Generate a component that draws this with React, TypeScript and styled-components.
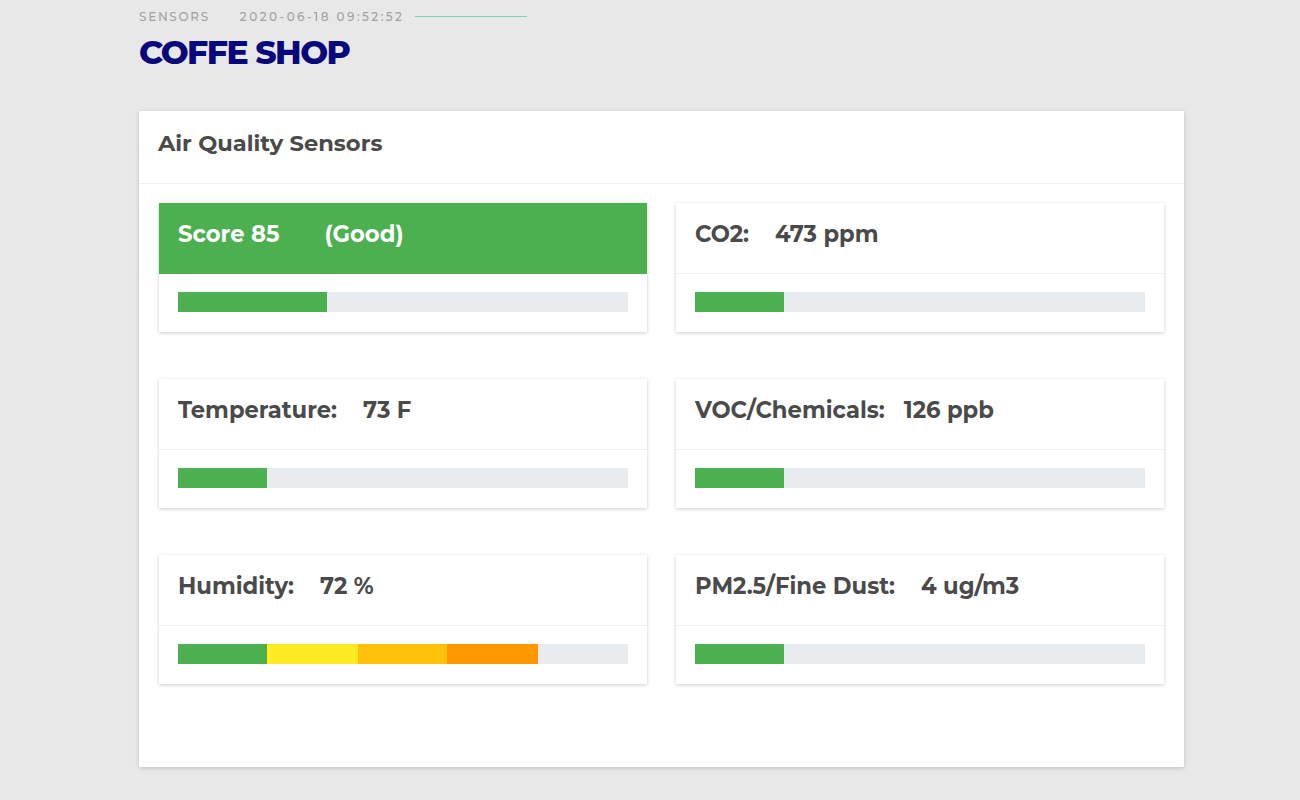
import React from "react";
import styled, { createGlobalStyle } from "styled-components";

const Global = createGlobalStyle`
  html, body { margin: 0; padding: 0; background: #e8e8e8; }
  body { font-family: "Montserrat", "Open Sans", "Liberation Sans", sans-serif; }
`;

const Page = styled.div`
  width: 1045px;
  margin-left: 139px;
  padding-top: 8px;
  padding-bottom: 33px;
`;

const Crumbs = styled.div`
  display: flex;
  align-items: center;
  height: 16px;
  font-family: "Montserrat", "Open Sans", sans-serif;
  font-weight: 500;
  font-size: 12px;
  letter-spacing: 1.7px;
  color: #a3a3a3;
`;

const Crumb = styled.span<{ $gap?: number; $spacing?: number }>`
  margin-right: ${(p) => p.$gap ?? 0}px;
  letter-spacing: ${(p) => p.$spacing ?? 1.7}px;
`;

const Line = styled.span`
  width: 112px;
  height: 1px;
  background: #7fd3b3;
`;

const Title = styled.h1`
  margin: 8px 0 0;
  font-family: "Montserrat", "Open Sans", sans-serif;
  font-weight: 800;
  font-size: 33px;
  line-height: 40px;
  letter-spacing: -1.5px;
  color: #08087c;
`;

const Panel = styled.section`
  margin-top: 39px;
  background: #fff;
  box-shadow: 0 1px 4px rgba(0, 0, 0, 0.18);
  min-height: 656px;
`;

const PanelHead = styled.div`
  height: 73px;
  box-sizing: border-box;
  padding: 0 19px 8px;
  display: flex;
  align-items: center;
  border-bottom: 1px solid #eeeeee;
  font-family: "Montserrat", sans-serif;
  font-weight: 700;
  font-size: 22.6px;
  color: #4a4a4a;
`;

const Grid = styled.div`
  display: grid;
  grid-template-columns: 488px 488px;
  column-gap: 29px;
  row-gap: 47px;
  padding: 19px 20px 20px;
`;

const Card = styled.div`
  background: #fff;
  box-shadow: 0 1px 4px rgba(0, 0, 0, 0.2);
  height: 129px;
  display: flex;
  flex-direction: column;
`;

const CardHead = styled.div<{ $good?: boolean }>`
  height: 71px;
  box-sizing: border-box;
  padding: 0 19px 8px;
  display: flex;
  align-items: center;
  background: ${(p) => (p.$good ? "#4caf50" : "#fff")};
  color: ${(p) => (p.$good ? "#fff" : "#4a4a4a")};
  border-bottom: 1px solid ${(p) => (p.$good ? "#4caf50" : "#efefef")};
  font-family: "Montserrat", sans-serif;
  font-weight: 700;
  font-size: 22.7px;
`;

const Value = styled.span<{ $gap: number }>`
  margin-left: ${(p) => p.$gap}px;
`;

const CardBody = styled.div`
  padding: 18px 19px 0;
`;

const Track = styled.div`
  height: 20px;
  background: #e9ecef;
  display: flex;
`;

const Seg = styled.div<{ $color: string }>`
  height: 100%;
  background: ${(p) => p.$color};
`;

type Sensor = {
  label: string;
  value: string;
  gap: number;
  good?: boolean;
  segs: { c: string; w: number }[];
};

const G = "#4caf50";
const sensors: Sensor[] = [
  { label: "Score 85", value: "(Good)", gap: 45, good: true, segs: [{ c: G, w: 33 }] },
  { label: "CO2:", value: "473 ppm", gap: 26, segs: [{ c: G, w: 19.8 }] },
  { label: "Temperature:", value: "73 F", gap: 26, segs: [{ c: G, w: 19.8 }] },
  { label: "VOC/Chemicals:", value: "126 ppb", gap: 19, segs: [{ c: G, w: 19.8 }] },
  {
    label: "Humidity:",
    value: "72 %",
    gap: 26,
    segs: [
      { c: G, w: 19.8 },
      { c: "#ffeb22", w: 20.2 },
      { c: "#ffc10a", w: 19.8 },
      { c: "#ff9800", w: 20.2 },
    ],
  },
  { label: "PM2.5/Fine Dust:", value: "4 ug/m3", gap: 26, segs: [{ c: G, w: 19.8 }] },
];

export default function App() {
  return (
    <>
      <Global />
      <Page>
        <Crumbs>
          <Crumb $gap={30}>SENSORS</Crumb>
          <Crumb $gap={11} $spacing={2.45}>2020-06-18 09:52:52</Crumb>
          <Line />
        </Crumbs>
        <Title>COFFE SHOP</Title>
        <Panel>
          <PanelHead>Air Quality Sensors</PanelHead>
          <Grid>
            {sensors.map((s) => (
              <Card key={s.label}>
                <CardHead $good={s.good}>
                  <span>{s.label}</span>
                  <Value $gap={s.gap}>{s.value}</Value>
                </CardHead>
                <CardBody>
                  <Track>
                    {s.segs.map((g, i) => (
                      <Seg key={i} $color={g.c} style={{ width: `${g.w}%` }} />
                    ))}
                  </Track>
                </CardBody>
              </Card>
            ))}
          </Grid>
        </Panel>
      </Page>
    </>
  );
}
